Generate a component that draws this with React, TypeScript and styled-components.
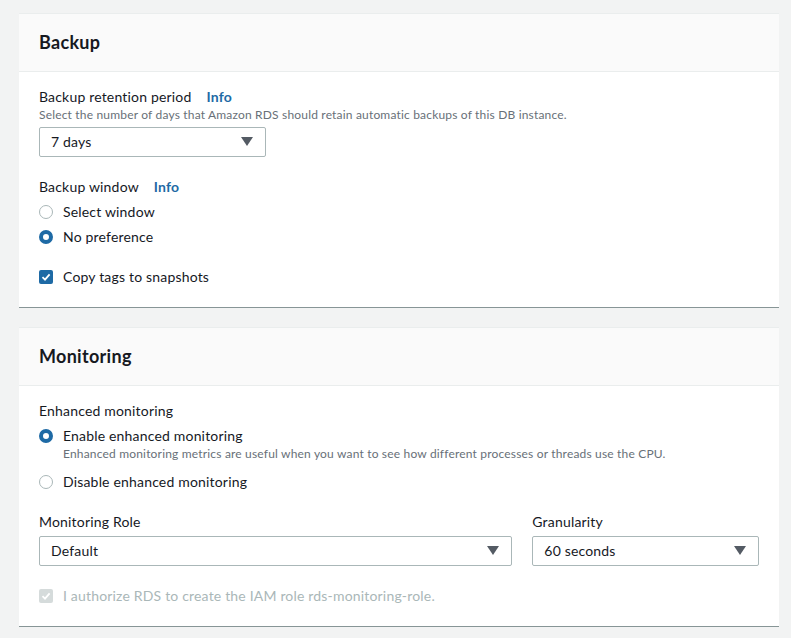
import React from 'react'
import styled, { createGlobalStyle } from 'styled-components'

const GlobalStyle = createGlobalStyle`
  html, body {
    margin: 0;
    padding: 0;
    background: #f2f3f3;
  }
  body {
    font-family: Lato, "Liberation Sans", Arial, sans-serif;
    color: #16191f;
    font-size: 14px;
    letter-spacing: 0.18px;
  }
`

const Page = styled.div`
  display: flex;
  flex-direction: column;
  gap: 20px;
  padding: 13px 12px 10px 19px;
`

const Card = styled.section`
  background: #fff;
  border-top: 1px solid #eaeded;
  box-shadow: 0 1px 0 0 #879596;
`

const CardHeader = styled.header`
  background: #fafafa;
  border-bottom: 1px solid #eaeded;
  padding: 17px 20px 18px;
`

const Title = styled.h2`
  margin: 0;
  font-size: 18px;
  line-height: 22px;
  font-weight: 700;
  letter-spacing: 0.3px;
`

const CardBody = styled.div`
  display: flex;
  flex-direction: column;
  gap: 20px;
  padding: 15px 20px 20px;
`

const Field = styled.div<{ $span?: number }>`
  display: flex;
  flex-direction: column;
  grid-column: ${({ $span }) => ($span ? `span ${$span}` : 'auto')};
`

const Label = styled.div`
  font-size: 14px;
  line-height: 20px;
  display: flex;
  gap: 15px;
`

const Info = styled.a`
  color: #1e6aa5;
  font-weight: 700;
  text-decoration: none;
`

const Description = styled.div<{ $indent?: boolean }>`
  font-size: 12px;
  line-height: 16px;
  color: #687078;
  padding-left: ${({ $indent }) => ($indent ? '24px' : '0')};
  margin-bottom: ${({ $indent }) => ($indent ? '5px' : '0')};
`

const SelectBox = styled.div<{ $width?: string }>`
  box-sizing: border-box;
  width: ${({ $width }) => $width || '100%'};
  height: 30px;
  margin-top: 4px;
  border: 1px solid #aab7b8;
  border-radius: 2px;
  background: #fff;
  display: flex;
  align-items: center;
  justify-content: space-between;
  padding: 0 12px 1px 11px;
  font-size: 14px;
`

const Caret = styled.span`
  width: 0;
  height: 0;
  border-left: 6px solid transparent;
  border-right: 6px solid transparent;
  border-top: 9px solid #545b64;
`

const Options = styled.div`
  display: flex;
  flex-direction: column;
  gap: 5px;
  margin-top: 5px;
`

const OptionRow = styled.label<{ $disabled?: boolean }>`
  display: flex;
  align-items: center;
  gap: 10px;
  font-size: 14px;
  line-height: 20px;
  color: ${({ $disabled }) => ($disabled ? '#aab7b8' : '#16191f')};
`

const Radio = styled.span<{ $checked?: boolean }>`
  box-sizing: border-box;
  width: 14px;
  height: 14px;
  border-radius: 50%;
  flex-shrink: 0;
  background: #fff;
  border: ${({ $checked }) => ($checked ? '4px solid #1e6aa5' : '1px solid #aab7b8')};
`

const Box = styled.span<{ $disabled?: boolean }>`
  width: 14px;
  height: 14px;
  border-radius: 2px;
  flex-shrink: 0;
  background: ${({ $disabled }) => ($disabled ? '#d5dbdb' : '#1e6aa5')};
  display: flex;
  align-items: center;
  justify-content: center;
`

const OptionGroup = styled.div`
  display: flex;
  flex-direction: column;
`

const Grid = styled.div`
  display: grid;
  grid-template-columns: repeat(12, 1fr);
  column-gap: 20px;
`

const Check = () => (
  <svg width="10" height="10" viewBox="0 0 10 10">
    <path d="M1.5 5.2 L4 7.6 L8.6 2.4" fill="none" stroke="#fff" strokeWidth="1.8" />
  </svg>
)

const Checkbox = ({ children, disabled }: { children: React.ReactNode; disabled?: boolean }) => (
  <OptionRow $disabled={disabled}>
    <Box $disabled={disabled}>
      <Check />
    </Box>
    {children}
  </OptionRow>
)

const RadioOption = ({ children, checked }: { children: React.ReactNode; checked?: boolean }) => (
  <OptionRow>
    <Radio $checked={checked} />
    {children}
  </OptionRow>
)

export default function App() {
  return (
    <>
      <GlobalStyle />
      <Page>
        <Card>
          <CardHeader>
            <Title>Backup</Title>
          </CardHeader>
          <CardBody>
            <Field>
              <Label>
                Backup retention period <Info>Info</Info>
              </Label>
              <Description>Select the number of days that Amazon RDS should retain automatic backups of this DB instance.</Description>
              <SelectBox $width="227px">
                7 days
                <Caret />
              </SelectBox>
            </Field>
            <Field>
              <Label>
                Backup window <Info>Info</Info>
              </Label>
              <Options>
                <RadioOption>Select window</RadioOption>
                <RadioOption checked>No preference</RadioOption>
              </Options>
            </Field>
            <Checkbox>Copy tags to snapshots</Checkbox>
          </CardBody>
        </Card>

        <Card>
          <CardHeader>
            <Title>Monitoring</Title>
          </CardHeader>
          <CardBody>
            <Field>
              <Label>Enhanced monitoring</Label>
              <Options>
                <OptionGroup>
                  <RadioOption checked>Enable enhanced monitoring</RadioOption>
                  <Description $indent>
                    Enhanced monitoring metrics are useful when you want to see how different processes or threads use the CPU.
                  </Description>
                </OptionGroup>
                <RadioOption>Disable enhanced monitoring</RadioOption>
              </Options>
            </Field>
            <Grid>
              <Field $span={8}>
                <Label>Monitoring Role</Label>
                <SelectBox>
                  Default
                  <Caret />
                </SelectBox>
              </Field>
              <Field $span={4}>
                <Label>Granularity</Label>
                <SelectBox>
                  60 seconds
                  <Caret />
                </SelectBox>
              </Field>
            </Grid>
            <Checkbox disabled>I authorize RDS to create the IAM role rds-monitoring-role.</Checkbox>
          </CardBody>
        </Card>
      </Page>
    </>
  )
}
